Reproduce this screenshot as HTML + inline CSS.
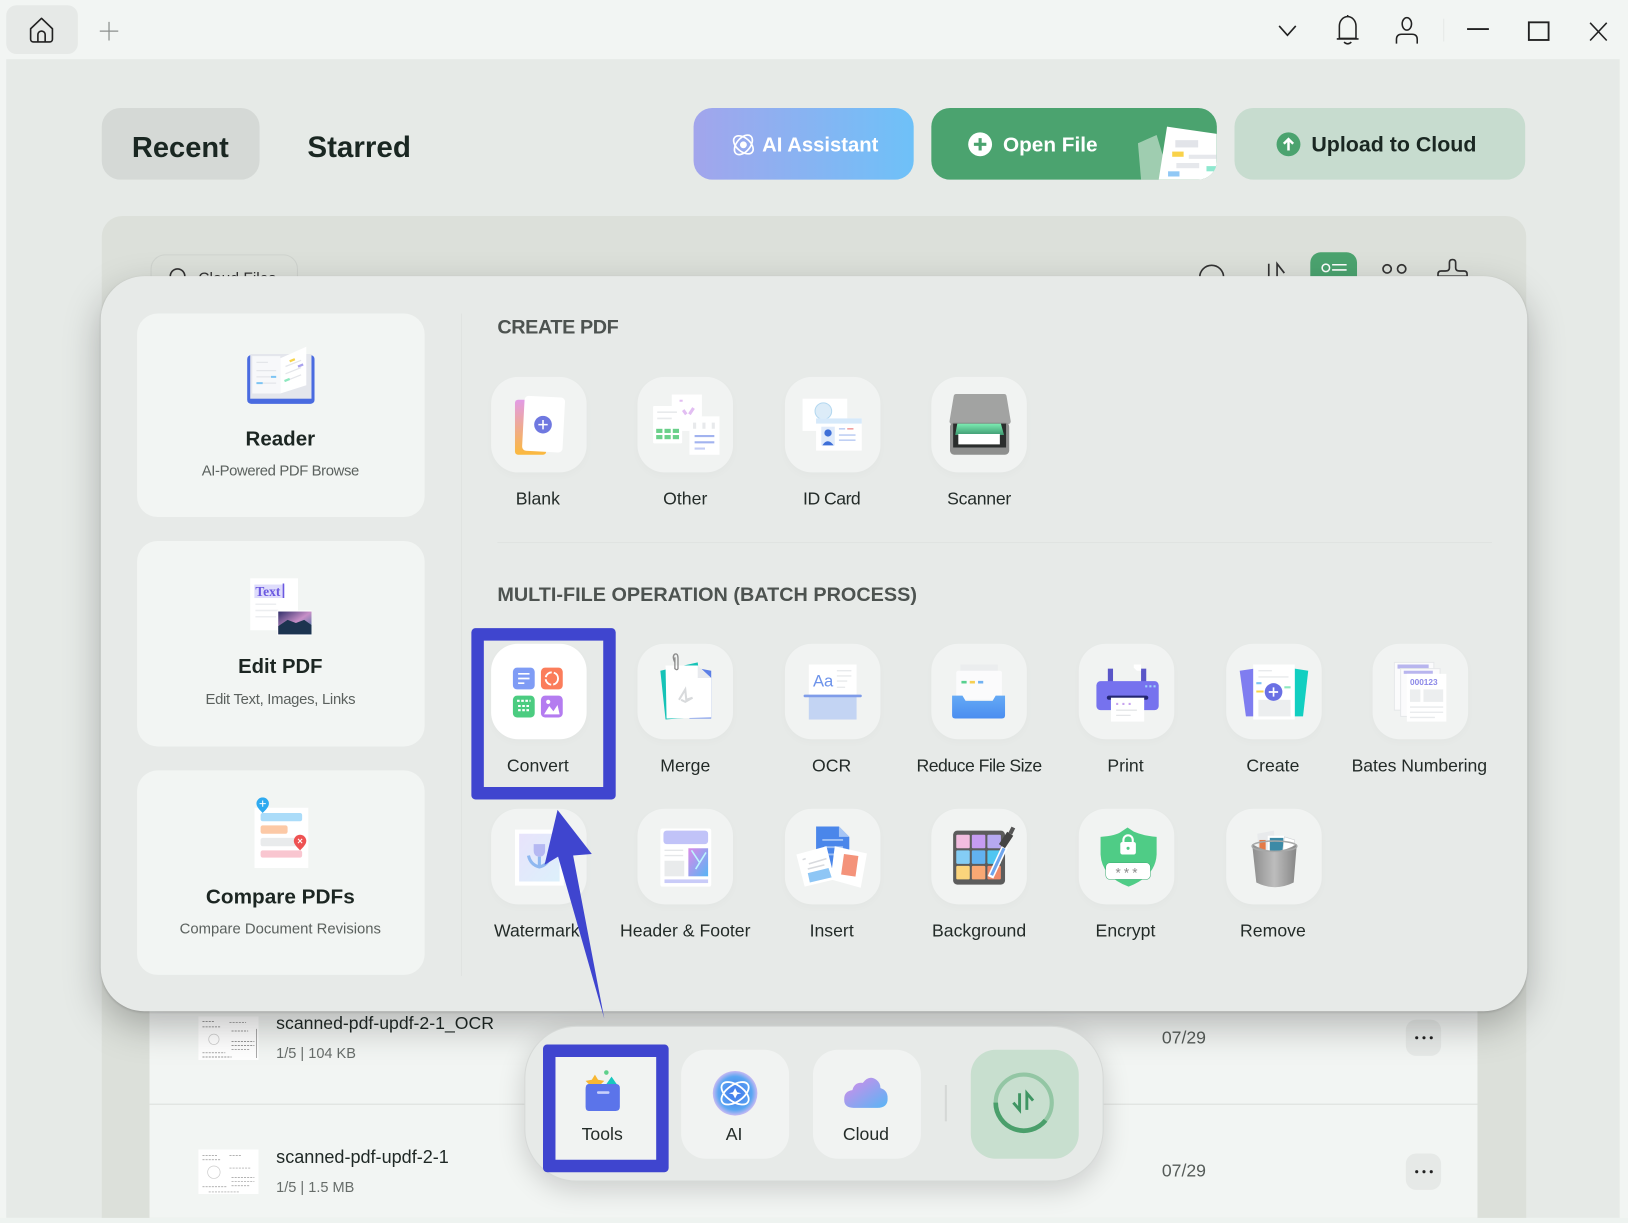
<!DOCTYPE html>
<html><head><meta charset="utf-8"><style>
html,body{margin:0;padding:0;width:1628px;height:1223px;overflow:hidden;background:#eef3f0}
*{box-sizing:border-box}
#w{position:absolute;left:0;top:0;width:1568px;height:1178px;transform:scale(1.03827);transform-origin:0 0;overflow:hidden;font-family:"Liberation Sans",sans-serif;color:#1c2622;background:#f2f5f3}
#w div,#w svg,#w span{position:absolute}
.tile svg{filter:blur(.35px)}
.t{text-align:center;width:240px;white-space:nowrap;line-height:24px;height:24px}
.lb{font-size:17px;color:#232b28}
.tile{width:92px;height:92px;border-radius:26px;background:#f1f3f2;box-shadow:0 3px 8px rgba(0,0,0,.02)}
.card{left:132px;width:277px;background:#f2f5f3;border-radius:20px}
.ct{font-size:20px;font-weight:bold;left:150px;color:#1c2622}
.cs{font-size:14.3px;left:150px;color:#5b615e}
.h{left:479px;font-size:19.1px;font-weight:bold;color:#4d5350;line-height:24px;white-space:nowrap}
.b{font-weight:bold;white-space:nowrap;line-height:30px}
.dock{width:104px;height:105px;border-radius:24px;background:#f1f3f2}
.dots{width:34px;height:35px;left:1354px;background:#e6e9e7;border-radius:10px}
.dots i{position:absolute;top:16px;width:3px;height:3px;border-radius:50%;background:#222}
</style></head><body><div id="w">
<svg width="0" height="0"><defs>
<linearGradient id="g1" x1="0" y1="0" x2="0" y2="1"><stop offset="0" stop-color="#e29be6"/><stop offset="1" stop-color="#fbb93c"/></linearGradient>
<linearGradient id="g2" x1="0" y1="0" x2="1" y2="1"><stop offset="0" stop-color="#e8e3fb"/><stop offset="1" stop-color="#dcf0fb"/></linearGradient>
<linearGradient id="g3" x1="0" y1="0" x2="1" y2="0"><stop offset="0" stop-color="#8d8d8d"/><stop offset=".5" stop-color="#bdbdbd"/><stop offset="1" stop-color="#868686"/></linearGradient>
<linearGradient id="g4" x1="0" y1="0" x2="1" y2="1"><stop offset="0" stop-color="#d98ae8"/><stop offset="1" stop-color="#58b5f5"/></linearGradient>
<linearGradient id="g5" x1="0" y1="0" x2="1" y2="1"><stop offset="0" stop-color="#312f6b"/><stop offset=".5" stop-color="#c78fc7"/><stop offset="1" stop-color="#2b6a9a"/></linearGradient>
<linearGradient id="g6" x1="0" y1="0" x2="0" y2="1"><stop offset="0" stop-color="#64a9f5"/><stop offset="1" stop-color="#4a8df0"/></linearGradient>
<radialGradient id="g7"><stop offset="0" stop-color="#3f74ea"/><stop offset=".75" stop-color="#5aa6f2"/><stop offset="1" stop-color="#c7b9f3"/></radialGradient>
<linearGradient id="g8" x1="0" y1="0" x2="0" y2="1"><stop offset="0" stop-color="#7cecb2"/><stop offset="1" stop-color="#3f9a72"/></linearGradient>
</defs></svg>

<!-- window -->
<div style="left:6px;top:57px;width:1554px;height:1116px;background:#e6eae7"></div>
<div style="left:0;top:1173px;width:1568px;height:5px;background:#eef3f0"></div>
<div style="left:6px;top:5px;width:69px;height:47px;background:#e6e9e7;border-radius:10px"></div>
<svg style="left:26px;top:15px" width="28" height="28" viewBox="0 0 32 32" fill="none" stroke="#222" stroke-width="1.8"><path d="M4 14.5 16 3 28 14.5V26a3 3 0 0 1-3 3H7a3 3 0 0 1-3-3Z" stroke-linejoin="round"/><path d="M12 29V21a4 4 0 0 1 8 0v8"/></svg>
<svg style="left:96px;top:21px" width="18" height="18" fill="none" stroke="#8b8f8d" stroke-width="1.2"><path d="M9 0V18M0 9H18"/></svg>
<svg style="left:1230px;top:22px" width="20" height="16" fill="none" stroke="#222" stroke-width="1.6"><path d="M2 3l8 9 8-9"/></svg>
<svg style="left:1284px;top:13px" width="28" height="32" fill="none" stroke="#222" stroke-width="1.5"><path d="M6 24V12a8 9 0 0 1 16 0v12ZM3.500 24.500H24.500M14 3V1.500M10.500 27.500q3.500 3.500 7 0"/></svg>
<svg style="left:1342px;top:15px" width="26" height="30" fill="none" stroke="#222" stroke-width="1.5"><ellipse cx="13" cy="8" rx="4.500" ry="6"/><path d="M3 27V23q0-5 5-5h10q5 0 5 5v4"/></svg>
<div style="left:1390px;top:18px;width:1px;height:22px;background:#e6e9e7"></div>
<svg style="left:1410px;top:20px" width="150" height="22" fill="none" stroke="#222" stroke-width="1.8"><path d="M3 8H24"/><rect x="62.500" y="1.500" width="19" height="17"/><path d="M121.500 2l16 17M137.500 2l-16 17" stroke-width="1.500"/></svg>

<!-- header row -->
<div style="left:98px;top:104px;width:152px;height:69px;background:#d5d9d6;border-radius:18px"></div>
<div class="b" style="left:127px;top:127px;font-size:28px;color:#1a2722">Recent</div>
<div class="b" style="left:296px;top:127px;font-size:28.500px;color:#1a2722">Starred</div>

<div style="left:668px;top:104px;width:212px;height:69px;border-radius:18px;background:linear-gradient(90deg,#a2a5ec,#6ec1f8)"></div>
<svg style="left:704px;top:127px" width="24" height="25" fill="none" stroke="#fff" stroke-width="1.600"><ellipse cx="12" cy="12.500" rx="11" ry="6.500" transform="rotate(40 12 12.500)"/><ellipse cx="12" cy="12.500" rx="11" ry="6.500" transform="rotate(-50 12 12.500)"/><circle cx="12" cy="12.500" r="2.500" fill="#fff"/></svg>
<div class="b" style="left:734px;top:125px;font-size:19.500px;color:#fff">AI Assistant</div>

<div style="left:897px;top:104px;width:275px;height:69px;border-radius:18px;background:#4ba36f;overflow:hidden">
<svg style="left:192px;top:14px" width="83" height="55"><path d="M7 20 25 12 38 55H10Z" fill="#9fcdb0"/><path d="M35 4 83 11V55H27Z" fill="#fff"/><rect x="43" y="17" width="22" height="7" fill="#e2e4e9"/><rect x="40" y="28" width="11" height="5" fill="#f9d24a"/><rect x="56" y="31" width="27" height="4" fill="#e6e8ec"/><rect x="44" y="39" width="22" height="5" fill="#e6e8ec"/><rect x="73" y="42" width="10" height="5" fill="#8ee8cf"/><rect x="36" y="47" width="11" height="5" fill="#90c8f5"/></svg>
</div>
<svg style="left:932px;top:127px" width="24" height="24"><circle cx="12" cy="12" r="11.500" fill="#fff"/><path d="M12 6V18M6 12H18" stroke="#4ba36f" stroke-width="3"/></svg>
<div class="b" style="left:966px;top:125px;font-size:20px;color:#fff">Open File</div>

<div style="left:1189px;top:104px;width:280px;height:69px;border-radius:18px;background:#c7dccf"></div>
<svg style="left:1229px;top:127px" width="24" height="24"><circle cx="12" cy="12" r="11.500" fill="#4ba36f"/><path d="M12 18V7M7.500 11.500 12 7l4.500 4.500" stroke="#fff" stroke-width="2.400" fill="none"/></svg>
<div class="b" style="left:1263px;top:125px;font-size:20.600px;color:#1a2722">Upload to Cloud</div>

<!-- list panel -->
<div style="left:98px;top:208px;width:1372px;height:965px;background:#dce0da;border-radius:20px 20px 0 0"></div>
<div style="left:145px;top:245px;width:142px;height:40px;border:1px solid #cfd3ce;border-radius:14px"></div>
<svg style="left:160px;top:255px" width="24" height="24" fill="none" stroke="#333" stroke-width="1.600"><circle cx="11" cy="11" r="7"/></svg>
<div style="left:191px;top:260px;font-size:15px;color:#333;white-space:nowrap">Cloud Files</div>
<svg style="left:1150px;top:240px" width="270" height="40" fill="none" stroke="#333" stroke-width="1.600"><circle cx="17" cy="27" r="11.500"/><path d="M72 14V30M80 30V14l7 9"/><circle cx="186" cy="19" r="4"/><circle cx="200" cy="19" r="4"/><path d="M249 10q-3 0-3 3v5q0 3-4 3h-4q-3 0-3 3v2h28v-2q0-3-3-3h-4q-4 0-4-3v-5q0-3-3-3Z"/></svg>
<div style="left:1262px;top:243px;width:45px;height:40px;background:#4ba36f;border-radius:10px"></div>
<svg style="left:1272px;top:251px" width="26" height="16" fill="none" stroke="#fff" stroke-width="1.500"><circle cx="5" cy="7" r="3.600"/><path d="M11 4H25M11 9H25"/></svg>

<div style="left:144px;top:960px;width:1279px;height:213px;background:#f2f5f3"></div>
<div style="left:144px;top:1063px;width:1279px;height:1px;background:#dcdfdc"></div>

<svg style="left:191px;top:979px" width="58" height="42"><rect width="58" height="42" fill="#fff"/><g stroke="#777" stroke-width=".7"><path d="M4 5H16M30 6H46M4 10H22M32 14H48M32 24H54M32 28H54M32 32H50M4 35H26M4 39H32" stroke-dasharray="2 1"/></g><circle cx="15" cy="22" r="5" fill="none" stroke="#ccc" stroke-width=".7"/><path d="M56 12V40" stroke="#999" stroke-width=".8"/></svg>
<svg style="left:191px;top:1107px" width="58" height="43"><rect width="58" height="43" fill="#fff"/><g stroke="#999" stroke-width=".7"><path d="M4 6H18M30 6H42M4 10H22M30 18H50M32 27H54M32 31H54M32 35H50M4 36H28M10 41H40" stroke-dasharray="2 1"/></g><circle cx="15" cy="22" r="6" fill="none" stroke="#ccc" stroke-width=".7"/></svg>
<div style="left:266px;top:975px;font-size:17px;color:#1f2825;white-space:nowrap;line-height:22px">scanned-pdf-updf-2-1_OCR</div>
<div style="left:266px;top:1004px;font-size:14px;color:#676d6a;white-space:nowrap;line-height:20px">1/5 | 104 KB</div>
<div style="left:266px;top:1103px;font-size:17.400px;color:#1f2825;white-space:nowrap;line-height:22px">scanned-pdf-updf-2-1</div>
<div style="left:266px;top:1133px;font-size:14px;color:#676d6a;white-space:nowrap;line-height:20px">1/5 | 1.5 MB</div>
<div style="left:1119px;top:990px;font-size:17px;color:#565c59;line-height:20px">07/29</div>
<div style="left:1119px;top:1118px;font-size:17px;color:#565c59;line-height:20px">07/29</div>
<div class="dots" style="top:982px"><i style="left:9px"></i><i style="left:16px"></i><i style="left:23px"></i></div>
<div class="dots" style="top:1111px"><i style="left:9px"></i><i style="left:16px"></i><i style="left:23px"></i></div>

<!-- main overlay panel -->
<div style="left:97px;top:266px;width:1374px;height:708px;background:#e7eae8;border-radius:42px;box-shadow:0 14px 36px rgba(0,0,0,.26),0 1px 2px rgba(0,0,0,.14)"></div>
<div class="card" style="top:302px;height:196px"></div>
<div class="card" style="top:521px;height:198px"></div>
<div class="card" style="top:742px;height:197px"></div>
<div style="left:444px;top:302px;width:1px;height:638px;background:#e0e3e1"></div>
<div style="left:479px;top:522px;width:958px;height:1px;background:#e0e3e1"></div>

<!-- reader icon -->
<svg style="left:238px;top:333px;filter:blur(.3px)" width="65" height="57" viewBox="0 0 65 57"><rect x="0" y="9" width="65" height="47" rx="4" fill="#4a6be0"/><rect x="3" y="8" width="59" height="43" fill="#e4e6ec"/><path d="M5 10H32V46H5Z" fill="#f7f8fa"/><path d="M32 12 57 1V38L32 46Z" fill="#fff"/><path d="M9 16H20M9 24H28M9 30H28M9 36H28M37 20 52 14M37 27 52 21M37 34 52 28" stroke="#e4e6ea" stroke-width="1.200"/><path d="M9 36H15" stroke="#7cc4f3" stroke-width="2"/><path d="M23 30H28" stroke="#7cc4f3" stroke-width="2"/><path d="M41 15 46 13" stroke="#f7d44a" stroke-width="2.200"/><path d="M49 20 54 18" stroke="#a9a2ee" stroke-width="2.200"/><path d="M36 34 41 32" stroke="#8ee8bf" stroke-width="2.200"/></svg>
<div class="t ct" style="top:411px;font-size:19.800px">Reader</div>
<div class="t cs" style="top:442px;letter-spacing:-.36px">AI-Powered PDF Browse</div>

<!-- edit icon -->
<svg style="left:240px;top:555px;filter:blur(.3px)" width="62" height="58" viewBox="0 0 62 58"><rect x="1" y="2" width="46" height="50" fill="#fff"/><rect x="5" y="8" width="29" height="13" fill="#dedcfb"/><text x="6" y="19" font-family="Liberation Serif,serif" font-weight="bold" font-size="13" fill="#6b59e0">Text</text><path d="M33 7V21" stroke="#6b59e0" stroke-width="1.500"/><path d="M6 27H26M6 33H28M6 39H26" stroke="#eceef0" stroke-width="1.500"/><rect x="27" y="33" width="33" height="24" fill="#fff"/><rect x="28" y="34" width="32" height="22" fill="url(#g5)"/><path d="M28 48 37 42 45 45 53 42 60 47V56H28Z" fill="#1c3450"/></svg>
<div class="t ct" style="top:630px;font-size:19.500px">Edit PDF</div>
<div class="t cs" style="top:662px;letter-spacing:-.27px">Edit Text, Images, Links</div>

<!-- compare icon -->
<svg style="left:245px;top:768px;filter:blur(.3px)" width="52" height="70" viewBox="0 0 52 70"><rect x="0" y="10" width="52" height="58" fill="#fff"/><rect x="6" y="15" width="40" height="8" rx="2" fill="#abdcf9"/><rect x="6" y="27" width="26" height="8" rx="2" fill="#fcc9a6"/><rect x="6" y="39" width="36" height="8" rx="2" fill="#e9ebec"/><rect x="6" y="51" width="40" height="7" rx="2" fill="#f9c6d0"/><path d="M8 0a6 6 0 0 1 6 6c0 3-3 6-6 9-3-3-6-6-6-9a6 6 0 0 1 6-6Z" fill="#2eaaf0"/><path d="M5 6H11M8 3V9" stroke="#fff" stroke-width="1"/><path d="M44 36a6 6 0 0 1 6 6c0 3-3 6-6 9-3-3-6-6-6-9a6 6 0 0 1 6-6Z" fill="#ee5252"/><path d="M42 40l4 4M46 40l-4 4" stroke="#fff" stroke-width="1"/></svg>
<div class="t ct" style="top:852px">Compare PDFs</div>
<div class="t cs" style="top:883px">Compare Document Revisions</div>

<div class="h" style="top:304px;letter-spacing:-.4px">CREATE PDF</div>
<div class="h" style="top:562px">MULTI-FILE OPERATION (BATCH PROCESS)</div>

<!-- ROW 1 -->
<div class="tile" style="left:473px;top:363px"><svg width="92" height="92"><rect x="23" y="22" width="30" height="53" rx="3" fill="url(#g1)"/><rect x="31" y="19" width="39" height="53" rx="4" fill="#fff" transform="rotate(3 50 46)"/><circle cx="50" cy="46" r="8.500" fill="#6f78e0"/><path d="M50 41.500V50.500M45.500 46H54.500" stroke="#fff" stroke-width="1.500"/></svg></div>
<div class="tile" style="left:614px;top:363px"><svg width="92" height="92"><rect x="33" y="17" width="29" height="35" fill="#fff"/><path d="M44 32 47 36M50 36 54 30M42 22V24" stroke="#e2bef2" stroke-width="3"/><rect x="15" y="28" width="28" height="36" rx="1" fill="#fff"/><path d="M19 34H38M19 40H33" stroke="#e8eaec" stroke-width="1.500"/><g fill="#6ad08a"><rect x="18" y="50" width="6" height="4"/><rect x="26" y="50" width="6" height="4"/><rect x="34" y="50" width="6" height="4"/><rect x="18" y="56" width="6" height="4"/><rect x="26" y="56" width="6" height="4"/><rect x="34" y="56" width="6" height="4"/></g><rect x="50" y="38" width="29" height="37" fill="#fff"/><path d="M55 44V50M64 44V50M73 44V50" stroke="#e8eaec" stroke-width="3"/><path d="M55 57H74M55 63H74" stroke="#a2b3ef" stroke-width="2"/><path d="M55 69H65" stroke="#c4cdf4" stroke-width="2"/></svg></div>
<div class="tile" style="left:756px;top:363px"><svg width="92" height="92"><rect x="17" y="21" width="43" height="31" fill="#fff"/><circle cx="37" cy="33" r="8" fill="#dcecf8" stroke="#b4d8f0"/><rect x="30" y="40" width="44" height="31" fill="#fff"/><rect x="30" y="40" width="44" height="5" fill="#d6e9fa"/><rect x="35" y="48" width="13" height="18" fill="#dfeafa"/><circle cx="41.500" cy="54" r="3.500" fill="#3e6fd8"/><path d="M36 66q5-8 11 0Z" fill="#3e6fd8"/><path d="M52 50H58M52 56H68M52 61H68" stroke="#c0d0f4" stroke-width="1.600"/><path d="M60 50H66" stroke="#f2a0a0" stroke-width="1.600"/></svg></div>
<div class="tile" style="left:897px;top:363px"><svg width="92" height="92"><path d="M24 19H70L74 43H20Z" fill="#a2a3a2" stroke="#a2a3a2" stroke-linejoin="round" stroke-width="5"/><rect x="18" y="44" width="57" height="31" fill="#8e8f8e" rx="4"/><rect x="21" y="45" width="51" height="23" fill="#2b2e2d"/><path d="M25 45H67L70 56H23Z" fill="url(#g8)"/><rect x="26" y="55" width="40" height="10" fill="#fff"/></svg></div>
<div class="t lb" style="left:398px;top:469px">Blank</div>
<div class="t lb" style="left:540px;top:469px">Other</div>
<div class="t lb" style="left:681px;top:469px;letter-spacing:-.5px">ID Card</div>
<div class="t lb" style="left:823px;top:469px;letter-spacing:-.25px">Scanner</div>

<!-- ROW 2 -->
<div class="tile" style="left:473px;top:620px;background:#fff"><svg width="92" height="92"><rect x="21" y="23" width="21" height="21" rx="4" fill="#7f9cf5"/><path d="M26 29H37M26 33.500H37M26 38H32" stroke="#fff" stroke-width="1.600"/><rect x="48" y="23" width="21" height="21" rx="4" fill="#fb7d5b"/><circle cx="58.500" cy="33.500" r="6" fill="none" stroke="#fff" stroke-width="1.800" stroke-dasharray="8 2"/><rect x="21" y="50" width="21" height="21" rx="4" fill="#4bcc80"/><path d="M25 55H38M26 60H38M26 64H38" stroke="#fff" stroke-width="2" stroke-dasharray="2.500 1.500"/><rect x="48" y="50" width="21" height="21" rx="4" fill="#b47cf0"/><path d="M51 68 56 60 60 65 64 59 66 68Z" fill="#fff"/><circle cx="55" cy="56" r="2" fill="#fff"/></svg></div>
<div class="tile" style="left:614px;top:620px"><svg width="92" height="92"><path d="M22 26 58 18 64 70 27 73Z" fill="#16c3b7"/><path d="M50 22 71 26V72H50Z" fill="#5c7fe6"/><path d="M27 21H58L71 33V71L28 72Z" fill="#fff"/><path d="M58 21V33H71Z" fill="#e8eaee"/><path d="M36 18q-3-6 0-8 3-1 3 4v10q-1 2-3 0V13" stroke="#8d8d8d" stroke-width="1.300" fill="none"/><path d="M40 54 46 44 47 54 53 52 46 56 42 54" stroke="#d8dadc" stroke-width="2" fill="none"/></svg></div>
<div class="tile" style="left:756px;top:620px"><svg width="92" height="92"><rect x="23" y="20" width="46" height="30" fill="#fff"/><text x="27" y="41" font-size="16" fill="#6d93ea" font-family="Liberation Sans,sans-serif">Aa</text><path d="M50 26H64M50 31H64M50 36H60M50 42H58" stroke="#e8eaec" stroke-width="1.300"/><rect x="23" y="51" width="46" height="22" fill="#c3d4f3"/><rect x="18" y="49" width="56" height="2.500" rx="1" fill="#7f9ce9"/></svg></div>
<div class="tile" style="left:897px;top:620px"><svg width="92" height="92"><rect x="28" y="20" width="36" height="30" fill="#ebedee"/><rect x="24" y="26" width="44" height="28" rx="2" fill="#fbfbfc"/><path d="M29 37H34" stroke="#58d08f" stroke-width="2.500"/><path d="M37 37H42" stroke="#f6cf52" stroke-width="2.500"/><path d="M45 37H50" stroke="#72b2f2" stroke-width="2.500"/><path d="M20 50H30L33 55H59L62 50H71V69Q71 72 68 72H23Q20 72 20 69Z" fill="url(#g6)"/></svg></div>
<div class="tile" style="left:1039px;top:620px"><svg width="92" height="92"><rect x="28" y="24" width="5" height="14" fill="#5a56c8"/><rect x="60" y="24" width="5" height="14" fill="#5a56c8"/><path d="M53 20h7v6h-4l-3-3Z" fill="#fff"/><rect x="17" y="36" width="60" height="28" rx="4" fill="#7672ee"/><rect x="27" y="50" width="40" height="4" rx="2" fill="#232670"/><rect x="31" y="52" width="32" height="23" fill="#fff"/><path d="M36 58h2M42 58h2M48 58h2" stroke="#c6a2ee" stroke-width="2"/><path d="M36 64H56M36 69H50" stroke="#e4e6e8" stroke-width="1.300"/><path d="M64 41h2M68 41h2M72 41h2" stroke="#9fd5fa" stroke-width="2"/></svg></div>
<div class="tile" style="left:1181px;top:620px"><svg width="92" height="92"><path d="M13 26 27 24V70H19Z" fill="#7f7df0"/><path d="M66 24 79 26 74 70H66Z" fill="#12cfc1"/><rect x="26" y="20" width="40" height="53" fill="#fff"/><path d="M31 26H44M31 32H60" stroke="#e8eaec" stroke-width="1.300"/><path d="M29 38H34" stroke="#7cc4f3" stroke-width="2"/><path d="M56 42H62" stroke="#8ee8bf" stroke-width="2"/><path d="M29 46H36" stroke="#f7d44a" stroke-width="2"/><rect x="31" y="54" width="31" height="16" fill="#eceeef"/><circle cx="45.600" cy="46.500" r="8.500" fill="#6a70e4"/><path d="M45.600 42V51M41 46.500H50" stroke="#fff" stroke-width="1.600"/></svg></div>
<div class="tile" style="left:1322px;top:620px"><svg width="92" height="92"><rect x="21" y="18" width="38" height="46" fill="#fbfbfc" stroke="#e6e8ea"/><rect x="24" y="20" width="30" height="4" fill="#b8b5ee"/><rect x="27" y="24" width="38" height="46" fill="#fbfbfc" stroke="#e6e8ea"/><rect x="30" y="26" width="28" height="3" fill="#b8b5ee"/><rect x="33" y="29" width="38" height="46" fill="#fff"/><text x="36" y="40" font-size="8" font-weight="bold" fill="#8c89e8" font-family="Liberation Sans,sans-serif">000123</text><rect x="36" y="44" width="10" height="12" fill="#eceeef"/><rect x="49" y="44" width="19" height="12" fill="#eceeef"/><path d="M36 61H68M36 66H68M36 71H60" stroke="#e8eaec" stroke-width="1.300"/></svg></div>
<div class="t lb" style="left:398px;top:726px">Convert</div>
<div class="t lb" style="left:540px;top:726px">Merge</div>
<div class="t lb" style="left:681px;top:726px">OCR</div>
<div class="t lb" style="left:823px;top:726px;letter-spacing:-.5px">Reduce File Size</div>
<div class="t lb" style="left:964px;top:726px">Print</div>
<div class="t lb" style="left:1106px;top:726px">Create</div>
<div class="t lb" style="left:1247px;top:726px;letter-spacing:-.06px">Bates Numbering</div>

<!-- ROW 3 -->
<div class="tile" style="left:473px;top:779px"><svg width="92" height="92"><rect x="23" y="20" width="47" height="54" fill="#fff"/><rect x="27" y="24" width="39" height="46" fill="url(#g2)"/><path d="M41 34H52V40Q52 46 46.500 46 41 46 41 40Z" fill="#b5b8f2"/><path d="M46.500 46V56M36 45Q38 54 46.500 56 55 54 57 45" stroke="#8fb8f0" stroke-width="3" fill="none"/></svg></div>
<div class="tile" style="left:614px;top:779px"><svg width="92" height="92"><rect x="22" y="19" width="49" height="56" rx="2" fill="#fff"/><rect x="25" y="21" width="43" height="13" rx="3" fill="#c1c3f8"/><rect x="49" y="38" width="19" height="27" fill="url(#g4)"/><path d="M52 40 60 52M66 42 56 58" stroke="#bdf5ff" stroke-width="1.500"/><path d="M26 40H44M26 45H44" stroke="#e5e7e9" stroke-width="1.300"/><rect x="26" y="50" width="19" height="15" fill="#e9ebec"/><rect x="26" y="68" width="42" height="3.500" fill="#c9cbf8"/></svg></div>
<div class="tile" style="left:756px;top:779px"><svg width="92" height="92"><path d="M30 17H52L62 27V57H30Z" fill="#4a86ea"/><path d="M52 17V27H62Z" fill="#a6c5f5"/><path d="M36 30H56M38 37H56M38 44H56" stroke="#9fc1f5" stroke-width="1.800"/><path d="M48 36 79 43 73 76 44 68Z" fill="#fff"/><rect x="56" y="44" width="14" height="20" fill="#f4937a" transform="rotate(8 60 50)"/><path d="M11 44 40 36 48 68 19 75Z" fill="#fff"/><path d="M17 49l3-1M23 53 40 48M22 58 38 54" stroke="#d8dade" stroke-width="1.500"/><path d="M22 62 42 57 45 66 24 71Z" fill="#8ec6f5"/></svg></div>
<div class="tile" style="left:897px;top:779px"><svg width="92" height="92"><rect x="21" y="21" width="50" height="52" rx="4" fill="#5c5c5c"/><g><rect x="24" y="25" width="13" height="13" rx="1" fill="#f2bde0"/><rect x="39" y="25" width="13" height="13" rx="1" fill="#c69cf2"/><rect x="54" y="25" width="13" height="13" rx="1" fill="#b6a9f0"/><rect x="24" y="40" width="13" height="13" rx="1" fill="#84cdf5"/><rect x="39" y="40" width="13" height="13" rx="1" fill="#62b2f0"/><rect x="54" y="40" width="13" height="13" rx="1" fill="#4fc6f2"/><rect x="24" y="55" width="13" height="13" rx="1" fill="#fbd47c"/><rect x="39" y="55" width="13" height="13" rx="1" fill="#f9a874"/><rect x="54" y="55" width="13" height="13" rx="1" fill="#ef8968"/></g><path d="M57 66 71 36" stroke="#fff" stroke-width="6"/><path d="M58 64 70 38" stroke="#6ea4ec" stroke-width="3"/><path d="M68 36 76 24" stroke="#444" stroke-width="7"/><path d="M76 24 79 18" stroke="#555" stroke-width="4"/></svg></div>
<div class="tile" style="left:1039px;top:779px"><svg width="92" height="92"><path d="M47 18 53 22Q62 26 75 27V44Q74 65 48 75 22 65 21 44V27Q36 26 41 22Z" fill="#4fcc86"/><rect x="26" y="52" width="43" height="16" rx="4" fill="#fff" stroke="#3fae74" stroke-width=".5"/><rect x="40" y="32" width="15" height="12" rx="2" fill="#fff"/><path d="M43 33V30a4.500 4.500 0 0 1 9 0v3" stroke="#fff" stroke-width="2" fill="none"/><circle cx="47.500" cy="38" r="1.500" fill="#4fcc86"/><text x="47.500" y="66" font-size="13" text-anchor="middle" fill="#8a8a8a" font-family="Liberation Sans,sans-serif" letter-spacing="3">***</text></svg></div>
<div class="tile" style="left:1181px;top:779px"><svg width="92" height="92"><path d="M30 24 46 21 47 42H31Z" fill="#e8eaec"/><rect x="32" y="30" width="6" height="12" fill="#e47a47"/><path d="M40 26H56V44H40Z" fill="#fff"/><rect x="42" y="28" width="13" height="14" fill="#3c8aa6"/><path d="M56 27 66 30 64 44H54Z" fill="#fff" stroke="#d0d2d4" stroke-width=".6"/><path d="M25 34Q47 47 68 34L65 71Q47 80 29 71Z" fill="url(#g3)"/><ellipse cx="46.500" cy="36" rx="21.500" ry="5" fill="none" stroke="#a7a8a8" stroke-width="1.500"/></svg></div>
<div class="t lb" style="left:397px;top:885px">Watermark</div>
<div class="t lb" style="left:540px;top:885px">Header &amp; Footer</div>
<div class="t lb" style="left:681px;top:885px">Insert</div>
<div class="t lb" style="left:823px;top:885px">Background</div>
<div class="t lb" style="left:964px;top:885px">Encrypt</div>
<div class="t lb" style="left:1106px;top:885px">Remove</div>

<!-- highlight box -->
<div style="left:454px;top:605px;width:139px;height:165px;border:12px solid #3f45cf;border-radius:4px"></div>

<!-- Dock -->
<div style="left:505px;top:988px;width:558px;height:150px;background:#e7eae8;border:1.500px solid #d6d9d7;border-radius:50px;box-shadow:0 8px 26px rgba(0,0,0,.16)"></div>
<div style="left:523px;top:1006px;width:121px;height:123px;background:#f1f3f2;border:12px solid #3f45cf;border-radius:4px"></div>
<svg style="left:560px;top:1030px" width="42" height="42"><path d="M10 4 13 9 19 10 15 14 16 20 10 17 4 20 5 14 1 10 7 9Z" fill="#f7b733" transform="translate(3 1)"/><path d="M29 7 36 17H22Z" fill="#18c7bf"/><circle cx="24" cy="3" r="2.200" fill="#5ed08b"/><path d="M4 19Q4 14 7 14H33Q37 14 37 18V36Q37 40 33 40H7Q4 40 4 36Z" fill="#5b74ea"/><rect x="15" y="21" width="12" height="2.500" rx="1" fill="#c8d0fa"/></svg>
<div class="t" style="left:460px;top:1081px;font-size:17px;color:#232b28">Tools</div>

<div class="dock" style="left:656px;top:1011px"></div>
<svg style="left:686px;top:1031px" width="44" height="44" fill="none" stroke="#fff" stroke-width="1.700"><circle cx="22" cy="22" r="21.500" fill="url(#g7)" stroke="none"/><ellipse cx="22" cy="22" rx="15" ry="8" transform="rotate(35 22 22)"/><ellipse cx="22" cy="22" rx="15" ry="8" transform="rotate(-35 22 22)"/><path d="M22 17 24 21 28 22 24 23 22 27 20 23 16 22 20 21Z" fill="#fff" stroke="none"/></svg>
<div class="t" style="left:587px;top:1081px;font-size:17px;color:#232b28">AI</div>

<div class="dock" style="left:783px;top:1011px"></div>
<svg style="left:813px;top:1035px" width="42" height="34"><path d="M9 32Q0 32 0 24 0 16 8 15 10 7 18 8 24 0 31 5 35 8 35 13 42 15 42 23 42 32 32 32Z" fill="url(#g4)"/></svg>
<div class="t" style="left:714px;top:1081px;font-size:17px;color:#232b28">Cloud</div>

<div style="left:910px;top:1045px;width:2px;height:35px;background:#d5d8d6"></div>
<div class="dock" style="left:935px;top:1011px;background:#c8dfcf"></div>
<svg style="left:955px;top:1031px" width="62" height="62" fill="none"><circle cx="31" cy="31" r="27" stroke="#93c6a4" stroke-width="4"/><path d="M4 31A27 27 0 0 0 52 48" stroke="#4a9f6b" stroke-width="4.500"/><path d="M27 22V38L21 31M34 38V22L40 29" stroke="#3f9563" stroke-width="2.800"/></svg>

<!-- arrow -->
<svg style="left:0;top:0" width="1568" height="1178"><path d="M537 780 570 822.500 552 824 582 981 537.500 825 524.500 833Z" fill="#3f45cf"/></svg>

</div></body></html>
